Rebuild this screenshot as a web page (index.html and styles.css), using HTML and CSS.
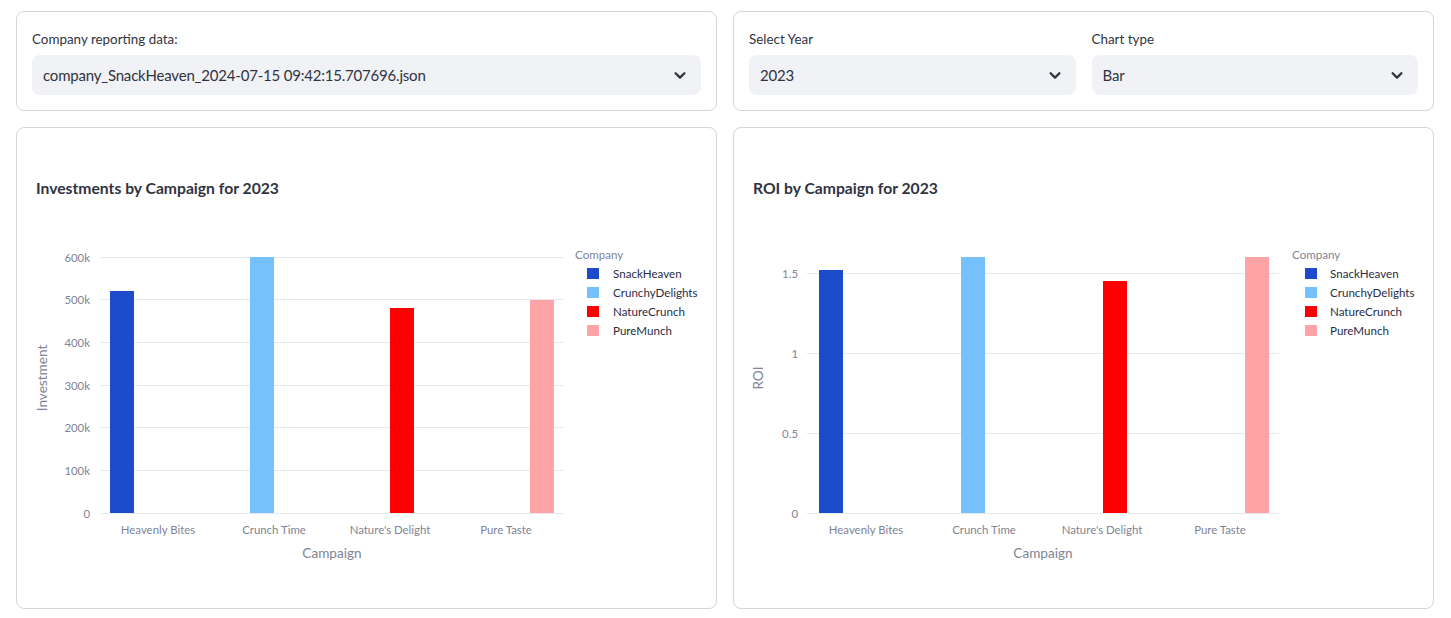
FILE: index.html
```html
<!DOCTYPE html>
<html lang="en">
<head>
<meta charset="utf-8">
<title>Company reporting</title>
<link rel="stylesheet" href="styles.css">
</head>
<body>
<div class="page">
  <section class="card">
    <div class="field">
      <label class="field-label">Company reporting data:</label>
      <div class="select">
        <span class="select-value">company_SnackHeaven_2024-07-15 09:42:15.707696.json</span>
        <svg class="chevron" width="20" height="20" viewBox="0 0 20 20"><path d="M5.6 8.2 L10 12.6 L14.4 8.2" fill="none" stroke="#31333f" stroke-width="2.3" stroke-linecap="round" stroke-linejoin="round"/></svg>
      </div>
    </div>
  </section>
  <section class="card">
    <div class="field-row">
      <div class="field">
        <label class="field-label">Select Year</label>
        <div class="select">
          <span class="select-value">2023</span>
          <svg class="chevron" width="20" height="20" viewBox="0 0 20 20"><path d="M5.6 8.2 L10 12.6 L14.4 8.2" fill="none" stroke="#31333f" stroke-width="2.3" stroke-linecap="round" stroke-linejoin="round"/></svg>
        </div>
      </div>
      <div class="field">
        <label class="field-label">Chart type</label>
        <div class="select">
          <span class="select-value">Bar</span>
          <svg class="chevron" width="20" height="20" viewBox="0 0 20 20"><path d="M5.6 8.2 L10 12.6 L14.4 8.2" fill="none" stroke="#31333f" stroke-width="2.3" stroke-linecap="round" stroke-linejoin="round"/></svg>
        </div>
      </div>
    </div>
  </section>

  <section class="card chart-card">
    <svg class="chart" width="669" height="450" viewBox="0 0 669 450">
      <text class="chart-title" x="4" y="44.6">Investments by Campaign for 2023</text>
      <g class="grid" shape-rendering="crispEdges">
        <line x1="68" x2="532" y1="114.5" y2="114.5"/>
        <line x1="68" x2="532" y1="156.5" y2="156.5"/>
        <line x1="68" x2="532" y1="199.5" y2="199.5"/>
        <line x1="68" x2="532" y1="242.5" y2="242.5"/>
        <line x1="68" x2="532" y1="284.5" y2="284.5"/>
        <line x1="68" x2="532" y1="327.5" y2="327.5"/>
        <line x1="68" x2="532" y1="370.5" y2="370.5"/>
      </g>
      <g class="tick" text-anchor="end">
        <text x="58" y="114.2">600k</text>
        <text x="58" y="156.8">500k</text>
        <text x="58" y="199.5">400k</text>
        <text x="58" y="242.2">300k</text>
        <text x="58" y="284.8">200k</text>
        <text x="58" y="327.5">100k</text>
        <text x="58" y="370.2">0</text>
      </g>
      <g shape-rendering="crispEdges">
        <rect x="78" y="148.1" width="24" height="221.9" fill="#1c4bcb"/>
        <rect x="218" y="114" width="24" height="256" fill="#76c1fd"/>
        <rect x="358" y="165.2" width="24" height="204.8" fill="#ff0000"/>
        <rect x="498" y="156.7" width="24" height="213.3" fill="#ffa4a6"/>
      </g>
      <g class="tick" text-anchor="middle">
        <text x="126" y="386.6">Heavenly Bites</text>
        <text x="242" y="386.6">Crunch Time</text>
        <text x="358" y="386.6">Nature's Delight</text>
        <text x="474" y="386.6">Pure Taste</text>
      </g>
      <text class="axis-title" x="300" y="410" text-anchor="middle">Campaign</text>
      <text class="axis-title" x="9.5" y="235" text-anchor="middle" transform="rotate(-90 9.5 235)">Investment</text>
      <g class="legend">
        <text class="legend-title" x="543" y="111.8">Company</text>
        <rect x="555" y="125" width="12" height="11" fill="#1c4bcb"/>
        <text x="581" y="130.4">SnackHeaven</text>
        <rect x="555" y="144" width="12" height="11" fill="#76c1fd"/>
        <text x="581" y="149.4">CrunchyDelights</text>
        <rect x="555" y="163" width="12" height="11" fill="#ff0000"/>
        <text x="581" y="168.4">NatureCrunch</text>
        <rect x="555" y="182" width="12" height="11" fill="#ffa4a6"/>
        <text x="581" y="187.4">PureMunch</text>
      </g>
    </svg>
  </section>

  <section class="card chart-card">
    <svg class="chart" width="669" height="450" viewBox="0 0 669 450">
      <text class="chart-title" x="4" y="44.6">ROI by Campaign for 2023</text>
      <g class="grid" shape-rendering="crispEdges">
        <line x1="58" x2="530" y1="130.5" y2="130.5"/>
        <line x1="58" x2="530" y1="210.5" y2="210.5"/>
        <line x1="58" x2="530" y1="290.5" y2="290.5"/>
        <line x1="58" x2="530" y1="370.5" y2="370.5"/>
      </g>
      <g class="tick" text-anchor="end">
        <text x="49" y="130.2">1.5</text>
        <text x="49" y="210.2">1</text>
        <text x="49" y="290.2">0.5</text>
        <text x="49" y="370.2">0</text>
      </g>
      <g shape-rendering="crispEdges">
        <rect x="70" y="126.8" width="24" height="243.2" fill="#1c4bcb"/>
        <rect x="212" y="114" width="24" height="256" fill="#76c1fd"/>
        <rect x="354" y="138" width="24" height="232" fill="#ff0000"/>
        <rect x="496" y="114" width="24" height="256" fill="#ffa4a6"/>
      </g>
      <g class="tick" text-anchor="middle">
        <text x="117" y="386.6">Heavenly Bites</text>
        <text x="235" y="386.6">Crunch Time</text>
        <text x="353" y="386.6">Nature's Delight</text>
        <text x="471" y="386.6">Pure Taste</text>
      </g>
      <text class="axis-title" x="294" y="410" text-anchor="middle">Campaign</text>
      <text class="axis-title" x="9" y="235" text-anchor="middle" transform="rotate(-90 9 235)">ROI</text>
      <g class="legend">
        <text class="legend-title" x="543" y="111.8">Company</text>
        <rect x="556" y="125" width="12" height="11" fill="#1c4bcb"/>
        <text x="581" y="130.4">SnackHeaven</text>
        <rect x="556" y="144" width="12" height="11" fill="#76c1fd"/>
        <text x="581" y="149.4">CrunchyDelights</text>
        <rect x="556" y="163" width="12" height="11" fill="#ff0000"/>
        <text x="581" y="168.4">NatureCrunch</text>
        <rect x="556" y="182" width="12" height="11" fill="#ffa4a6"/>
        <text x="581" y="187.4">PureMunch</text>
      </g>
    </svg>
  </section>
</div>
</body>
</html>
```

FILE: styles.css
```css
* { box-sizing: border-box; }

html, body {
  margin: 0;
  background: #ffffff;
  font-family: Lato, "Noto Sans", "Liberation Sans", sans-serif;
  color: #31333f;
}

.page {
  display: grid;
  grid-template-columns: 1fr 1fr;
  gap: 16px;
  padding: 11px 17px 0 16px;
}

.card {
  border: 1px solid #d6d6d9;
  border-radius: 8px;
  padding: 15px;
}

.field-row {
  display: flex;
  gap: 16px;
}

.field {
  flex: 1;
  display: flex;
  flex-direction: column;
  gap: 4px;
}

.field-label {
  height: 24px;
  display: flex;
  align-items: center;
  padding-bottom: 0;
  font-size: 13.4px;
  color: #31333f;
}

.select {
  height: 40px;
  background: #f0f2f6;
  border-radius: 8px;
  display: flex;
  align-items: center;
  justify-content: space-between;
  padding: 0 11px 1px 11px;
}

.select-value {
  font-size: 15px;
  letter-spacing: -0.2px;
  color: #31333f;
}

.chevron {
  display: block;
  flex: none;
}

.chart-card {
  height: 482px;
}

.chart {
  display: block;
  font-family: Lato, "Noto Sans", "Liberation Sans", sans-serif;
}

.chart text {
  dominant-baseline: central;
}

.chart-title {
  font-size: 15.7px;
  font-weight: 700;
  fill: #31333f;
}

.grid line {
  stroke: #e6e9ef;
  stroke-width: 1;
}

.tick text {
  font-size: 11.4px;
  fill: #808495;
}

.axis-title {
  font-size: 13.6px;
  fill: #808495;
}

.legend-title {
  font-size: 11.6px;
  fill: #808495;
}

.legend text {
  font-size: 11.6px;
  fill: #2a2d45;
}

.legend .legend-title {
  fill: #808495;
}
```
